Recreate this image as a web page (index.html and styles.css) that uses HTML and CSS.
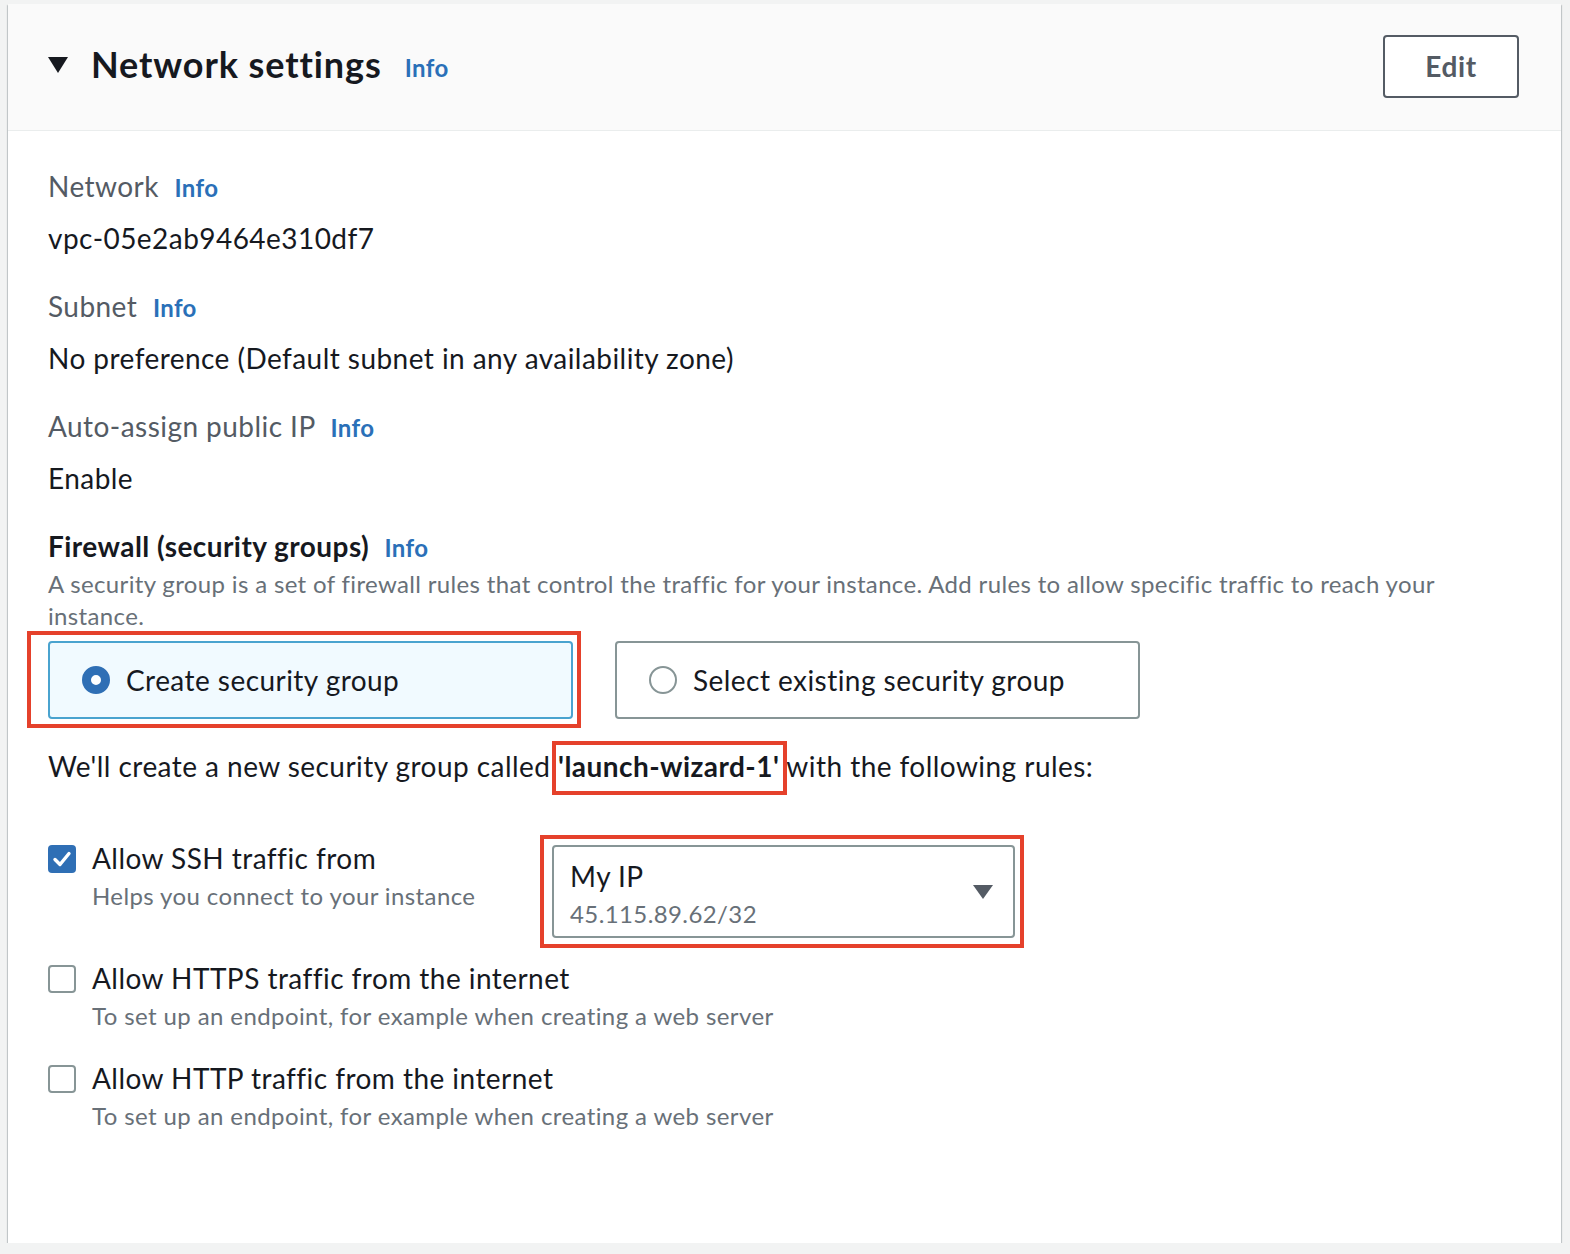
FILE: index.html
```html
<!DOCTYPE html>
<html lang="en">
<head>
<meta charset="utf-8">
<title>Network settings</title>
<link rel="stylesheet" href="styles.css">
</head>
<body>
<div class="panel">
  <div class="panel-header">
    <div class="title-wrap">
      <svg class="caret" width="20" height="16" viewBox="0 0 20 16"><path d="M0 0 H20 L10 16 Z" fill="#16191f"/></svg>
      <h2 class="title">Network settings</h2>
      <a class="info info-h">Info</a>
    </div>
    <button class="btn-edit">Edit</button>
  </div>
  <div class="panel-body">
    <div class="field">
      <div class="label">Network <a class="info">Info</a></div>
      <div class="value">vpc-05e2ab9464e310df7</div>
    </div>
    <div class="field">
      <div class="label">Subnet <a class="info">Info</a></div>
      <div class="value">No preference (Default subnet in any availability zone)</div>
    </div>
    <div class="field">
      <div class="label">Auto-assign public IP <a class="info">Info</a></div>
      <div class="value">Enable</div>
    </div>
    <div class="firewall">
      <div class="label strong">Firewall (security groups) <a class="info">Info</a></div>
      <div class="desc">A security group is a set of firewall rules that control the traffic for your instance. Add rules to allow specific traffic to reach your instance.</div>
    </div>
    <div class="tiles">
      <div class="tile tile-selected">
        <span class="radio radio-on"></span>
        <span class="tile-text">Create security group</span>
        <span class="mark mark-tile"></span>
      </div>
      <div class="tile">
        <span class="radio"></span>
        <span class="tile-text">Select existing security group</span>
      </div>
    </div>
    <p class="create-note">We'll create a new security group called <b class="sg-name">'launch-wizard-1'<span class="mark mark-name"></span></b> with the following rules:</p>
    <div class="rule rule-ssh">
      <div class="rule-main">
        <span class="checkbox checked"><svg width="28" height="28" viewBox="0 0 28 28"><path d="M7 14.5 L12 19.5 L21 8.5" fill="none" stroke="#fff" stroke-width="3.4" stroke-linecap="round" stroke-linejoin="round"/></svg></span>
        <div class="rule-text">
          <div class="rule-title">Allow SSH traffic from</div>
          <div class="rule-sub">Helps you connect to your instance</div>
        </div>
      </div>
      <div class="select">
        <div class="select-text">
          <div class="select-main">My IP</div>
          <div class="select-sub">45.115.89.62/32</div>
        </div>
        <svg class="select-caret" width="20" height="14" viewBox="0 0 20 14"><path d="M0 0 H20 L10 14 Z" fill="#545b64"/></svg>
        <span class="mark mark-select"></span>
      </div>
    </div>
    <div class="rule">
      <div class="rule-main">
        <span class="checkbox"></span>
        <div class="rule-text">
          <div class="rule-title">Allow HTTPS traffic from the internet</div>
          <div class="rule-sub">To set up an endpoint, for example when creating a web server</div>
        </div>
      </div>
    </div>
    <div class="rule">
      <div class="rule-main">
        <span class="checkbox"></span>
        <div class="rule-text">
          <div class="rule-title">Allow HTTP traffic from the internet</div>
          <div class="rule-sub">To set up an endpoint, for example when creating a web server</div>
        </div>
      </div>
    </div>
  </div>
</div>
</body>
</html>
```
FILE: styles.css
```css
* { box-sizing: border-box; }
html, body { margin: 0; padding: 0; }
body {
  background: #f2f3f3;
  padding: 4px 9px 0 8px;
  font-family: "Lato", "Open Sans", sans-serif;
  color: #16191f;
  letter-spacing: 0.45px;
}
.panel {
  background: #fff;
  box-shadow: 0 2px 1px 0 rgba(0, 28, 36, 0.35), 1px 1px 1px 0 rgba(0, 28, 36, 0.15), -1px 1px 1px 0 rgba(0, 28, 36, 0.15);
  height: 1239px;
}
.panel-header {
  height: 127px;
  background: #fafafa;
  border-bottom: 1px solid #eaeded;
  display: flex;
  align-items: center;
  justify-content: space-between;
  padding: 0 42px 6px 40px;
}
.title-wrap {
  display: flex;
  align-items: center;
}
.caret { margin-right: 23px; margin-top: 2px; }
.title {
  margin: 0;
  font-size: 36px;
  font-weight: 700;
  line-height: 44px;
  color: #16191f;
  letter-spacing: 0.9px;
}
.info {
  color: #2a70b8;
  font-weight: 700;
  font-size: 24px;
  margin-left: 8px;
  letter-spacing: 0.4px;
}
.info-h { margin-left: 23px; margin-top: 6px; }
.btn-edit {
  width: 136px;
  height: 63px;
  border: 2px solid #545b64;
  border-radius: 4px;
  background: #fff;
  color: #545b64;
  font-family: inherit;
  font-size: 28px;
  font-weight: 700;
  letter-spacing: 0.6px;
  padding: 0;
  margin-top: 4px;
}
.panel-body {
  padding: 35px 40px 0 40px;
}
.label {
  font-size: 28px;
  line-height: 40px;
  color: #545b64;
}
.label.strong {
  color: #16191f;
  font-weight: 700;
}
.value {
  font-size: 28px;
  line-height: 40px;
  margin-top: 10px;
}
.field { margin-bottom: 28px; }
.desc {
  font-size: 24px;
  line-height: 32px;
  color: #687078;
  margin-top: 0;
  padding-right: 40px;
  letter-spacing: 0.35px;
}
.tiles {
  display: flex;
  gap: 42px;
  margin-top: 9px;
}
.tile {
  position: relative;
  width: 525px;
  height: 78px;
  border: 2px solid #879596;
  border-radius: 4px;
  display: flex;
  align-items: center;
  padding-left: 32px;
  background: #fff;
}
.tile-selected {
  border-color: #4aa3cf;
  background: #f1faff;
}
.radio {
  width: 28px;
  height: 28px;
  border-radius: 50%;
  border: 2px solid #879596;
  background: #fff;
  flex: none;
}
.radio-on {
  border: 9px solid #2f6fb5;
  background: #fff;
}
.tile-text {
  font-size: 28px;
  margin-left: 16px;
}
.mark {
  position: absolute;
  border: 4px solid #e5412b;
  pointer-events: none;
}
.mark-tile { left: -23px; top: -12px; right: -10px; bottom: -11px; }
.create-note {
  margin: 27px 0 0 0;
  font-size: 28px;
  line-height: 40px;
}
.sg-name {
  position: relative;
  font-weight: 700;
}
.mark-name { left: -6px; top: -8px; right: -8px; bottom: -12px; }
.rule {
  display: flex;
  align-items: flex-start;
  margin-top: 24px;
}
.rule-ssh { margin-top: 52px; margin-bottom: -4px; }
.rule-main {
  display: flex;
  align-items: flex-start;
  width: 504px;
  flex: none;
}
.checkbox {
  width: 28px;
  height: 28px;
  border: 2px solid #879596;
  border-radius: 4px;
  margin-top: 7px;
  flex: none;
  background: #fff;
}
.checkbox.checked {
  border: none;
  background: #2f6fb5;
}
.checkbox svg { display: block; }
.rule-text { margin-left: 16px; white-space: nowrap; }
.rule-title {
  font-size: 28px;
  line-height: 40px;
}
.rule-sub {
  font-size: 24px;
  line-height: 36px;
  color: #687078;
  letter-spacing: 0.4px;
}
.select {
  position: relative;
  width: 463px;
  height: 93px;
  margin-top: 7px;
  border: 2px solid #879596;
  border-radius: 4px;
  display: flex;
  align-items: center;
  justify-content: space-between;
  padding: 0 20px 0 16px;
}
.select-text { margin-top: 6px; }
.select-main {
  font-size: 28px;
  line-height: 38px;
}
.select-sub {
  font-size: 24px;
  line-height: 38px;
  color: #687078;
  letter-spacing: 0.4px;
}
.select-caret { margin-top: 0; }
.mark-select { left: -14px; top: -12px; right: -11px; bottom: -12px; }
```
